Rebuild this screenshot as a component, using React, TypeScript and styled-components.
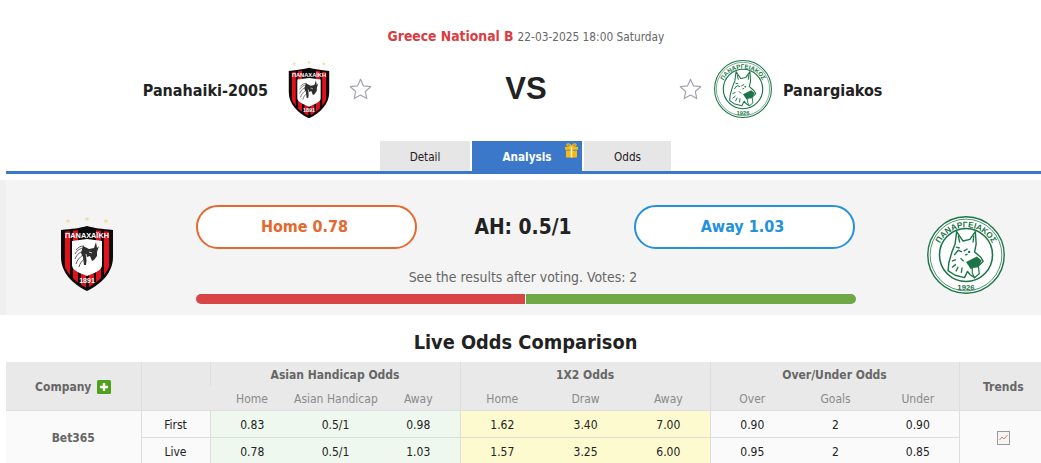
import React from "react";
import styled, { createGlobalStyle } from "styled-components";

const Global = createGlobalStyle`
  html, body { margin: 0; padding: 0; background: #fff; overflow: hidden; height: 463px; }
  body { font-family: "DejaVu Sans Condensed", "Noto Sans", "Liberation Sans", sans-serif; color: #222; }
  * { box-sizing: border-box; }
`;

const Page = styled.div`
  width: 1041px;
  height: 463px;
  overflow: hidden;
`;

const Header = styled.header`
  padding: 28px 0 18px 11px;
`;

const MatchInfo = styled.div`
  display: flex;
  justify-content: center;
  align-items: baseline;
  gap: 4px;
  height: 16px;
  line-height: 16px;
  font-size: 11.8px;
  color: #666;
`;

const League = styled.span`
  font-size: 13.8px;
  font-weight: 700;
  color: #dc3b3f;
`;

const TeamRow = styled.div`
  display: grid;
  grid-template-columns: 1fr 308px 1fr;
  align-items: center;
  height: 60px;
  margin-top: 15px;
`;

const Team = styled.div<{ $side: "left" | "right" }>`
  display: flex;
  align-items: center;
  justify-content: ${(p) => (p.$side === "left" ? "flex-end" : "flex-start")};
`;

const TeamName = styled.span<{ $gap: number; $side: "left" | "right" }>`
  padding-top: 3px;
  font-size: 16px;
  font-weight: 700;
  color: #222;
  ${(p) => (p.$side === "left" ? `margin-right: ${p.$gap}px;` : `margin-left: ${p.$gap}px;`)}
`;

const Versus = styled.div`
  text-align: center;
  font-family: "Liberation Sans", Arial, sans-serif;
  font-size: 31px;
  font-weight: 700;
  color: #222;
`;

const StarBox = styled.svg<{ $ml?: number; $mr?: number }>`
  width: 23px;
  height: 22px;
  margin-left: ${(p) => p.$ml ?? 0}px;
  margin-right: ${(p) => p.$mr ?? 0}px;
  flex: none;
`;

const TabBar = styled.nav`
  display: flex;
  justify-content: center;
  gap: 2px;
  height: 37px;
  margin: 0 0 0 6px;
  padding: 4px 0 0 4px;
  border-bottom: 3px solid #3b78c9;
`;

const Tab = styled.div<{ $active?: boolean; $w: number }>`
  position: relative;
  width: ${(p) => p.$w}px;
  height: 30px;
  line-height: 32px;
  text-align: center;
  font-size: 11.6px;
  font-weight: ${(p) => (p.$active ? 700 : 400)};
  color: ${(p) => (p.$active ? "#fff" : "#222")};
  background: ${(p) => (p.$active ? "#3b78c9" : "#e6e6e6")};
`;

const GiftBadge = styled.svg`
  position: absolute;
  top: 2px;
  right: 3px;
  width: 15px;
  height: 15px;
`;

const VotePanel = styled.section`
  display: grid;
  grid-template-columns: 190px 660px 1fr;
  height: 135px;
  margin-top: 6px;
  background: #f4f4f4;
  border-left: 6px solid #efefef;
`;

const CrestCell = styled.div<{ $side: "left" | "right" }>`
  display: flex;
  align-items: flex-start;
  justify-content: ${(p) => (p.$side === "left" ? "flex-start" : "flex-end")};
  padding: 36px ${(p) => (p.$side === "left" ? "0 0 54px" : "36px 0 0")};
`;

const VoteCenter = styled.div`
  padding-top: 25px;
`;

const VoteRow = styled.div`
  display: flex;
  align-items: center;
  justify-content: space-between;
  padding-right: 1px;
`;

const VoteButton = styled.div<{ $color: string }>`
  width: 221px;
  height: 44px;
  padding-right: 4px;
  line-height: 40px;
  text-align: center;
  font-size: 16px;
  font-weight: 700;
  color: ${(p) => p.$color};
  background: #fff;
  border: 2px solid ${(p) => p.$color};
  border-radius: 22px;
`;

const Handicap = styled.div`
  margin-right: 5px;
  font-size: 20.8px;
  font-weight: 700;
  color: #222;
`;

const VoteNote = styled.div`
  margin-top: 19px;
  padding-right: 6px;
  height: 18px;
  line-height: 18px;
  text-align: center;
  font-size: 13.9px;
  color: #666;
`;

const VoteBar = styled.div`
  display: flex;
  height: 10px;
  margin-top: 8px;
  border-radius: 5px;
  overflow: hidden;
`;

const VoteShare = styled.div<{ $color: string; $grow: number }>`
  flex: ${(p) => p.$grow} 0 0;
  background: ${(p) => p.$color};
`;

const Title = styled.h2`
  margin: 0;
  padding-left: 10px;
  height: 47px;
  line-height: 55px;
  text-align: center;
  font-size: 19.8px;
  font-weight: 700;
  color: #222;
`;

const TableWrap = styled.div`
  padding-left: 6px;
  width: 1047px;
`;

const OddsTable = styled.table`
  width: 1041px;
  table-layout: fixed;
  border-collapse: collapse;
  font-size: 12px;
`;

const Head = styled.th<{ $sub?: boolean; $noBorder?: boolean }>`
  height: 24px;
  padding: 2px 0 0;
  white-space: nowrap;
  background: #e9e9e9;
  text-align: center;
  font-size: 12px;
  font-weight: ${(p) => (p.$sub ? 400 : 700)};
  color: ${(p) => (p.$sub ? "#8a8a8a" : "#666")};
  border-left: ${(p) => (p.$sub ? "none" : "1px solid #ddd")};
  border-bottom: ${(p) => (p.$noBorder ? "none" : "1px solid #ddd")};
  &:first-child { border-left: none; }
`;

const GroupEdge = styled(Head)`
  border-left: 1px solid #ddd;
`;

const Row = styled.tr`
  height: 27px;
`;

const Cell = styled.td<{ $tone?: "green" | "yellow" | "plain"; $edge?: boolean }>`
  padding: 2px 0 0;
  text-align: center;
  color: #222;
  background: ${(p) => (p.$tone === "green" ? "#eff8ee" : p.$tone === "yellow" ? "#fefad0" : "#fafafa")};
  border-bottom: 1px solid #ddd;
  border-left: ${(p) => (p.$edge ? "1px solid #ddd" : "none")};
`;

const CompanyCell = styled(Cell)`
  font-weight: 700;
  font-size: 12px;
  color: #666;
`;

const PlusIcon = styled.span`
  display: inline-flex;
  width: 14px;
  height: 14px;
  margin-left: 6px;
  vertical-align: -3px;
`;

const TrendIcon = styled.svg`
  display: block;
  width: 13px;
  height: 14px;
  margin: 0 auto;
`;

function Star(props: { ml?: number; mr?: number }) {
  return (
    <StarBox $ml={props.ml} $mr={props.mr} viewBox="0 0 23 22">
      <path
        d="M11.5 1.3l3 6.6 7.2.8-5.4 4.8 1.5 7.1-6.3-3.6-6.3 3.6 1.5-7.1L1.3 8.7l7.2-.8z"
        fill="#fff"
        stroke="#a3a3b0"
        strokeWidth="1.2"
        strokeLinejoin="round"
      />
    </StarBox>
  );
}

function Gift() {
  return (
    <GiftBadge viewBox="0 0 15 15">
      <path d="M7.5 3.5C6 .5 3 .2 3 1.8 3 3 5 3.6 7.5 3.5zM7.5 3.5C9 .5 12 .2 12 1.8 12 3 10 3.6 7.5 3.5z" fill="none" stroke="#f5bb14" strokeWidth="1.3" />
      <rect x="1" y="3.8" width="13" height="3" fill="#f5bb14" />
      <rect x="2" y="7.5" width="11" height="7" fill="#f5bb14" />
      <rect x="6.7" y="3.8" width="1.6" height="10.7" fill="#fff3c4" />
    </GiftBadge>
  );
}

const STAR_SHAPE = "M0-2.6l.7 1.7 1.9.1-1.5 1.2.5 1.8L0 1.2l-1.6 1 .5-1.8-1.5-1.2 1.9-.1z";

function RedCrest({ width, id }: { width: number; id: string }) {
  const stripes = [5, 13, 36, 44];
  return (
    <svg width={width} height={(width * 75) / 54} viewBox="0 0 54 75" style={{ display: "block", flex: "none" }}>
      <g fill="#ecdfa0">
        <path d={STAR_SHAPE} transform="translate(8 5)" />
        <path d={STAR_SHAPE} transform="translate(27 3)" />
        <path d={STAR_SHAPE} transform="translate(46 5)" />
      </g>
      <path d="M1 14C12 13 20 12 27 10c7 2 15 3 26 4v27c0 16-12 27-26 34C13 68 1 57 1 41z" fill="#0b0b0b" />
      <clipPath id={id}>
        <path d="M3 16c9-1 18-2 24-4 6 2 15 3 24 4v25c0 14-11 24-24 31C14 65 3 55 3 41z" />
      </clipPath>
      <g clipPath={`url(#${id})`}>
        {stripes.map((x) => (
          <rect key={x} x={x} y="12" width="5" height="60" fill="#e3101e" />
        ))}
        <rect x="21" y="58" width="5" height="14" fill="#e3101e" />
        <rect x="29" y="58" width="5" height="14" fill="#e3101e" />
      </g>
      <path d="M12 25l15-2 15 2v24c0 5-7 8-15 11-8-3-15-6-15-11z" fill="#fff" />
      <g fill="none" stroke="#5a5a5a" strokeWidth="1">
        <path d="M16 34c2-3 5-4 8-4M15 38c2-4 6-6 9-6M15 43c2-5 5-7 9-8M16 48c1-4 4-7 7-9M19 51c1-4 3-6 5-8" />
      </g>
      <path d="M23 30l6 3 5-1 2-6 1 6 2-2-2 6 0 4-3 4-2 1-2-5-3 1-1 8-2 0-1-8-2-4z" fill="#2e2e2e" />
      <path d="M29 36l3 1M26 38l1 6" stroke="#fff" strokeWidth=".8" />
      <text x="27" y="22" textAnchor="middle" fontSize="7" fontWeight="700" fill="#fff" textLength="44" lengthAdjust="spacingAndGlyphs" fontFamily="'Liberation Sans', sans-serif">ΠΑΝΑΧΑΪΚΗ</text>
      <text x="27" y="67" textAnchor="middle" fontSize="7" fontWeight="700" fill="#fff" fontFamily="'Liberation Sans', sans-serif">1891</text>
    </svg>
  );
}

function GreenCrest({ size, id }: { size: number; id: string }) {
  const g = "#1b7547";
  return (
    <svg width={size} height={size} viewBox="0 0 100 100" style={{ display: "block", flex: "none" }}>
      <circle cx="50" cy="50" r="49" fill="#fff" stroke={g} strokeWidth="1.8" />
      <circle cx="50" cy="50" r="46" fill="none" stroke={g} strokeWidth="1" />
      <circle cx="50" cy="50" r="34" fill="#fff" stroke={g} strokeWidth="2" />
      <defs>
        <path id={id} d="M12.5 55A37.6 37.6 0 1 1 87.5 55" />
      </defs>
      <text fontSize="10.5" fontWeight="700" fill={g} fontFamily="'Liberation Sans', sans-serif">
        <textPath href={`#${id}`} startOffset="50%" textAnchor="middle">ΠΑΝΑΡΓΕΙΑΚΟΣ</textPath>
      </text>
      <text x="50" y="95" fontSize="10" fontWeight="700" textAnchor="middle" fill={g} fontFamily="'Liberation Sans', sans-serif">1926</text>
      <path d="M38 20L36 36 32 46 28 60 27 70 36 76 48 79 52 71 55 75 61 79 66 72 65 65 72 58 69 53 61 46 63 36 62 20 55 30 46 32Z" fill="#fff" stroke={g} strokeWidth="1.8" strokeLinejoin="round" />
      <path d="M40 25l2 9M60 25l-1 9M35 50l5-6 5 2M47 45l5-3M49 50l3-1M32 58l5-2M32 66l5-4M37 71l3-6M44 73l1-7M43 54l4 4M37 40l5 1" fill="none" stroke={g} strokeWidth="1.7" />
      <path d="M50 59L64 52 70 57 65 67 56 68Z" fill={g} />
      <path d="M58 66l8-1 1 9-6 5-3-6z" fill="#fff" stroke={g} strokeWidth="1.5" />
      <circle cx="54" cy="46" r="1.5" fill={g} />
    </svg>
  );
}

type Rows = { label: string; ah: string[]; x12: string[]; ou: string[] };

const rows: Rows[] = [
  { label: "First", ah: ["0.83", "0.5/1", "0.98"], x12: ["1.62", "3.40", "7.00"], ou: ["0.90", "2", "0.90"] },
  { label: "Live", ah: ["0.78", "0.5/1", "1.03"], x12: ["1.57", "3.25", "6.00"], ou: ["0.95", "2", "0.85"] },
];

const colWidths = [135, 69, 84, 83, 83, 84, 83, 83, 84, 83, 82, 88];

export default function App() {
  return (
    <Page>
      <Global />
      <Header>
        <MatchInfo>
          <League>Greece National B</League>
          <span>22-03-2025 18:00 Saturday</span>
        </MatchInfo>
        <TeamRow>
          <Team $side="left">
            <TeamName $side="left" $gap={20}>Panahaiki-2005</TeamName>
            <RedCrest width={42} id="shield-top" />
            <Star ml={19} />
          </Team>
          <Versus>VS</Versus>
          <Team $side="right">
            <Star ml={-1} mr={12} />
            <GreenCrest size={58} id="top-arc" />
            <TeamName $side="right" $gap={11}>Panargiakos</TeamName>
          </Team>
        </TeamRow>
      </Header>
      <TabBar>
        <Tab $w={90}>Detail</Tab>
        <Tab $w={110} $active>
          Analysis
          <Gift />
        </Tab>
        <Tab $w={87}>Odds</Tab>
      </TabBar>
      <VotePanel>
        <CrestCell $side="left">
          <RedCrest width={54} id="shield-panel" />
        </CrestCell>
        <VoteCenter>
          <VoteRow>
            <VoteButton $color="#e4692f">Home 0.78</VoteButton>
            <Handicap>AH: 0.5/1</Handicap>
            <VoteButton $color="#2491dc">Away 1.03</VoteButton>
          </VoteRow>
          <VoteNote>See the results after voting. Votes: 2</VoteNote>
          <VoteBar>
            <VoteShare $color="#d84547" $grow={329} />
            <VoteShare $color="#fff" $grow={1} />
            <VoteShare $color="#70a846" $grow={330} />
          </VoteBar>
        </VoteCenter>
        <CrestCell $side="right">
          <GreenCrest size={78} id="panel-arc" />
        </CrestCell>
      </VotePanel>
      <Title>Live Odds Comparison</Title>
      <TableWrap>
        <OddsTable>
          <colgroup>
            {colWidths.map((w, i) => (
              <col key={i} style={{ width: w }} />
            ))}
          </colgroup>
          <thead>
            <tr>
              <Head rowSpan={2}>
                Company
                <PlusIcon>
                  <svg width="14" height="14" viewBox="0 0 14 14">
                    <rect width="14" height="14" rx="1.5" fill="#4ea11b" />
                    <path d="M7 3v8M3 7h8" stroke="#fff" strokeWidth="2.4" />
                  </svg>
                </PlusIcon>
              </Head>
              <Head rowSpan={2} />
              <Head colSpan={3} $noBorder>Asian Handicap Odds</Head>
              <Head colSpan={3} $noBorder>1X2 Odds</Head>
              <Head colSpan={3} $noBorder>Over/Under Odds</Head>
              <Head rowSpan={2}>Trends</Head>
            </tr>
            <tr>
              <GroupEdge $sub>Home</GroupEdge>
              <Head $sub>Asian Handicap</Head>
              <Head $sub>Away</Head>
              <GroupEdge $sub>Home</GroupEdge>
              <Head $sub>Draw</Head>
              <Head $sub>Away</Head>
              <GroupEdge $sub>Over</GroupEdge>
              <Head $sub>Goals</Head>
              <Head $sub>Under</Head>
            </tr>
          </thead>
          <tbody>
            {rows.map((r, i) => (
              <Row key={r.label}>
                {i === 0 && <CompanyCell rowSpan={2}>Bet365</CompanyCell>}
                <Cell $edge>{r.label}</Cell>
                {r.ah.map((v, j) => (
                  <Cell key={j} $tone="green" $edge={j === 0}>{v}</Cell>
                ))}
                {r.x12.map((v, j) => (
                  <Cell key={j} $tone="yellow" $edge={j === 0}>{v}</Cell>
                ))}
                {r.ou.map((v, j) => (
                  <Cell key={j} $edge={j === 0}>{v}</Cell>
                ))}
                {i === 0 && (
                  <Cell rowSpan={2} $edge>
                    <TrendIcon viewBox="0 0 13 14">
                      <rect x=".5" y=".5" width="12" height="13" fill="#f4f4f4" stroke="#9a9a9a" />
                      <path d="M2.5 9l2.5-3 2 2 3.5-4" fill="none" stroke="#c98a68" strokeWidth="1" />
                    </TrendIcon>
                  </Cell>
                )}
              </Row>
            ))}
          </tbody>
        </OddsTable>
      </TableWrap>
    </Page>
  );
}
